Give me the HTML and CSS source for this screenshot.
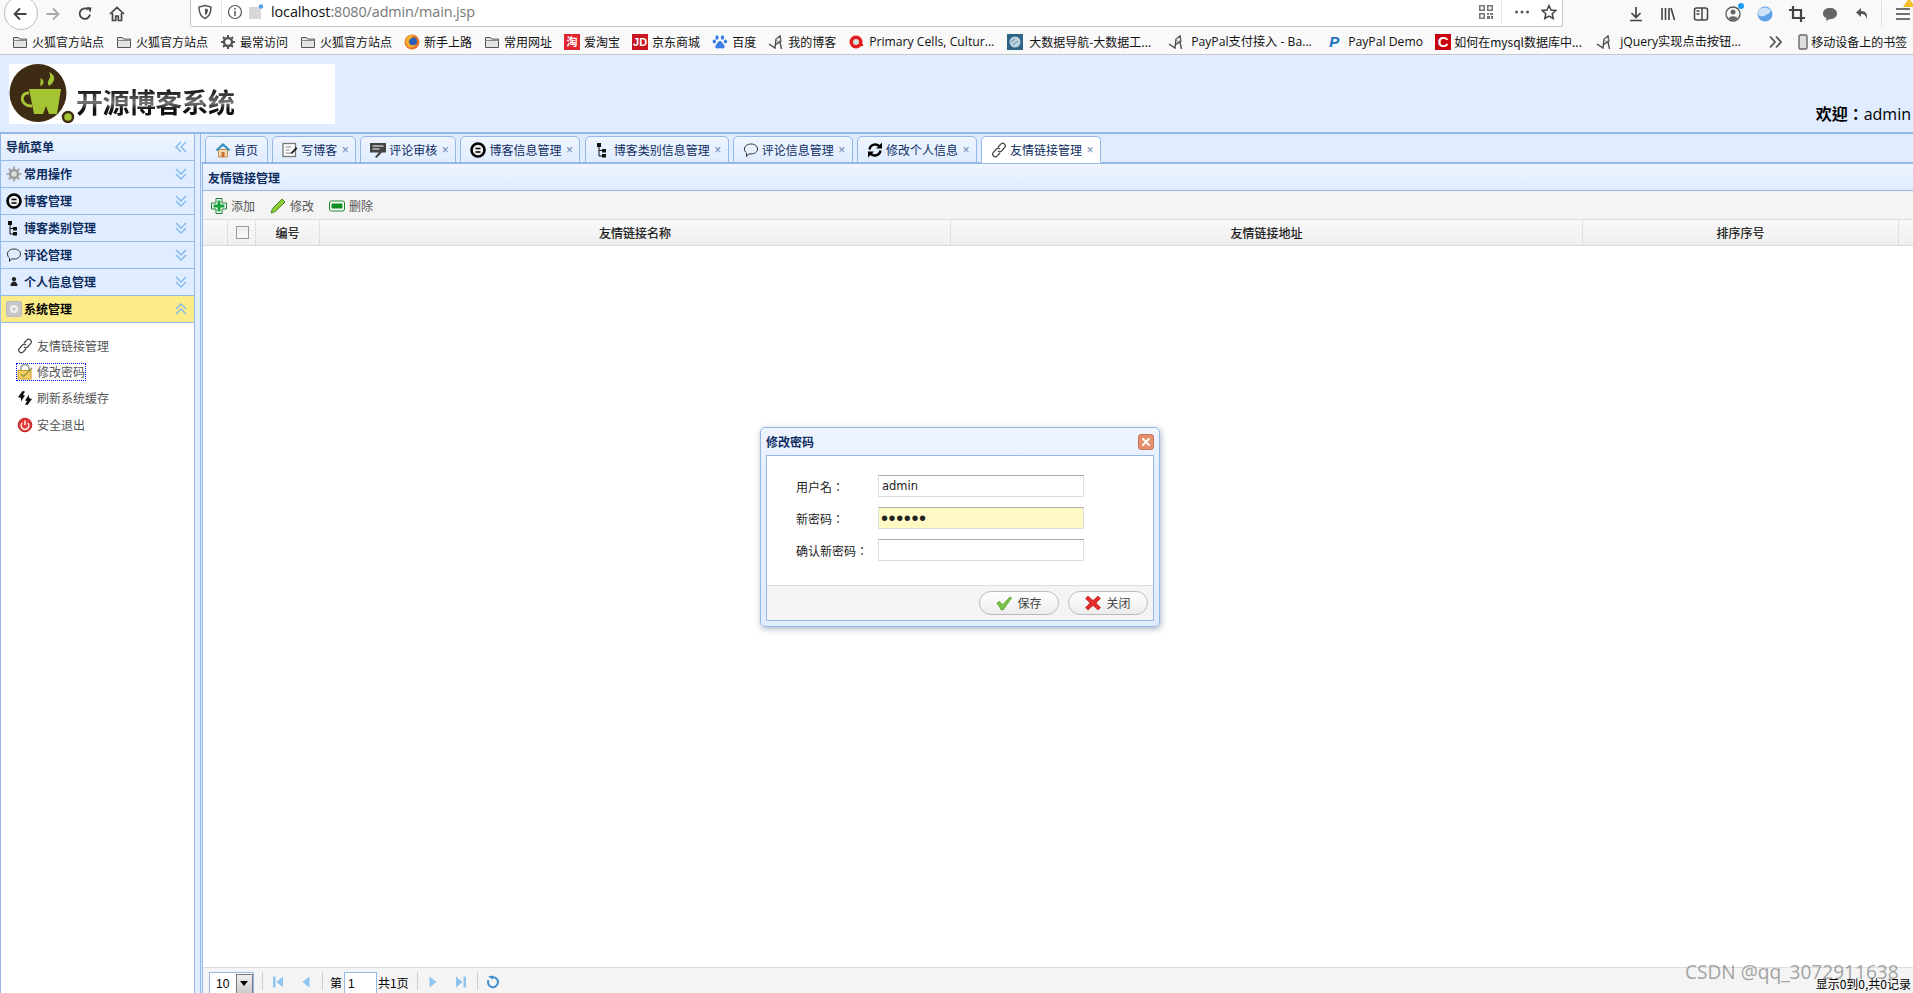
FILE: index.html
```html
<!DOCTYPE html>
<html lang="zh">
<head>
<meta charset="utf-8">
<title>开源博客系统</title>
<link rel="stylesheet" href="styles.css">
</head>
<body>
<svg class="sprite" aria-hidden="true">
  <symbol id="folder" viewBox="0 0 16 16"><path d="M1.500 3.500h5l1.300 1.600h6.700v8.400h-13z" fill="#e4e4e4" stroke="#555"/><path d="M1.500 6.500h13" stroke="#888"/></symbol>
  <symbol id="gear" viewBox="0 0 16 16"><circle cx="8" cy="8" r="4" fill="none" stroke="#555" stroke-width="2.400"/><path d="M8 1v3M8 12v3M1 8h3M12 8h3M3 3l2 2M11 11l2 2M13 3l-2 2M5 11l-2 2" stroke="#555" stroke-width="2"/></symbol>
  <symbol id="gearc" viewBox="0 0 16 16"><circle cx="8" cy="8" r="4" fill="#ddd" stroke="#999" stroke-width="2.400"/><path d="M8 .5v3M8 12.500v3M.5 8h3M12.500 8h3M2.700 2.700l2 2M11.300 11.300l2 2M13.300 2.700l-2 2M4.700 11.300l-2 2" stroke="#aaa" stroke-width="2.200"/></symbol>
  <symbol id="ff" viewBox="0 0 16 16"><circle cx="8" cy="8" r="7.500" fill="#e8742a"/><circle cx="9" cy="7.500" r="4" fill="#2b5fb8"/><path d="M2 6c1-4 5-6 9-4-3 0-4 2-4 3-2 0-3 2-2 4 1 3 5 3 7 1-1 3-5 4-7 3-2-1-4-4-3-7z" fill="#f6b22c"/></symbol>
  <symbol id="paw" viewBox="0 0 16 16"><g fill="#3a7fe8"><ellipse cx="5" cy="3.500" rx="1.700" ry="2.300"/><ellipse cx="10.500" cy="3.500" rx="1.700" ry="2.300"/><ellipse cx="2.300" cy="7.500" rx="1.700" ry="2.100"/><ellipse cx="13.500" cy="7.500" rx="1.700" ry="2.100"/><path d="M8 7c-2 0-3 3-4.500 4.500-1 2 1 3.500 2.500 3 1-.3 3-.3 4 0 1.500.5 3.500-1 2.500-3C11 10 10 7 8 7z"/></g></symbol>
  <symbol id="blog" viewBox="0 0 16 16"><path d="M1 10l6 4 1-9 4-3 1 5-6 4M12 8l1.500 7" fill="none" stroke="#444" stroke-width="1.300"/><circle cx="10.500" cy="5.500" r="2" fill="none" stroke="#888"/></symbol>
  <symbol id="cell" viewBox="0 0 16 16"><circle cx="8" cy="8" r="6.500" fill="#e21b1b"/><circle cx="8" cy="8" r="3" fill="#cfe3dc"/><circle cx="14" cy="11" r="1.200" fill="#e21b1b"/></symbol>
  <symbol id="data" viewBox="0 0 16 16"><rect width="16" height="16" fill="#2d6488"/><circle cx="8" cy="8" r="5.500" fill="#bcd3dc"/><path d="M4 8l4-3M6 11l5-4" stroke="#5b8aa3"/></symbol>
  <symbol id="phone" viewBox="0 0 16 16"><rect x="4" y="1" width="8" height="14" rx="1.500" fill="#ddd" stroke="#666" stroke-width="1.400"/></symbol>
  <symbol id="back" viewBox="0 0 16 16"><path d="M14.500 8h-12M8 2.500L2.500 8 8 13.500" fill="none" stroke="currentColor" stroke-width="1.800"/></symbol>
  <symbol id="fwd" viewBox="0 0 16 16"><path d="M1.500 8h12M8 2.500L13.500 8 8 13.500" fill="none" stroke="currentColor" stroke-width="1.800"/></symbol>
  <symbol id="reload" viewBox="0 0 16 16"><path d="M13 8.500A5.200 5.200 0 1 1 11 3.500" fill="none" stroke="currentColor" stroke-width="1.800"/><path d="M9.500 1l5 .5-1 5z" fill="currentColor"/></symbol>
  <symbol id="home" viewBox="0 0 16 16"><path d="M1 8l7-6.500L15 8M3.500 7v7.500h3.200V10h2.600v4.500h3.200V7" fill="none" stroke="currentColor" stroke-width="1.700"/></symbol>
  <symbol id="shield" viewBox="0 0 16 16"><path d="M8 1.500l6 1.500c0 6-1.500 9.500-6 11.500C3.500 12.500 2 9 2 3z" fill="none" stroke="#555" stroke-width="1.500"/><path d="M8 4.500l3 .8c0 3-.7 4.700-3 6z" fill="#555"/></symbol>
  <symbol id="info" viewBox="0 0 16 16"><circle cx="8" cy="8" r="6.500" fill="none" stroke="#555" stroke-width="1.200"/><path d="M8 7v5M8 4v1.500" stroke="#555" stroke-width="1.500"/></symbol>
  <symbol id="page" viewBox="0 0 16 16"><rect x="1" y="3" width="12" height="12" fill="#d8d8d8"/><circle cx="13" cy="2.500" r="2.300" fill="#5b9fe8"/></symbol>
  <symbol id="qr" viewBox="0 0 16 16"><g fill="#777"><path d="M1 1h6v6H1zM2.500 2.500v3h3v-3zM9 1h6v6H9zM10.500 2.500v3h3v-3zM1 9h6v6H1zM2.500 10.500v3h3v-3zM9 9h2v2H9zM12 9h3v2h-3zM9 12h3v3H9zM13 12h2v3h-2z"/></g></symbol>
  <symbol id="dots" viewBox="0 0 16 16"><g fill="#555"><circle cx="2.500" cy="8" r="1.500"/><circle cx="8" cy="8" r="1.500"/><circle cx="13.500" cy="8" r="1.500"/></g></symbol>
  <symbol id="star" viewBox="0 0 16 16"><path d="M8 1.500l2 4.500 4.800.5-3.600 3.200 1 4.800L8 12l-4.200 2.500 1-4.800L1.200 6.500 6 6z" fill="none" stroke="#444" stroke-width="1.500"/></symbol>
  <symbol id="dl" viewBox="0 0 16 16"><path d="M8 1v10M3.500 7L8 11.500 12.500 7M2 14.500h12" fill="none" stroke="#444" stroke-width="1.700"/></symbol>
  <symbol id="lib" viewBox="0 0 16 16"><path d="M2 2v12M5.500 2v12M9 2v12M11 2l3.500 12" fill="none" stroke="#444" stroke-width="1.600"/></symbol>
  <symbol id="side" viewBox="0 0 16 16"><rect x="1.500" y="2" width="13" height="12" rx="2" fill="none" stroke="#444" stroke-width="1.500"/><path d="M9 2v12M3.500 5h3M3.500 8h3" stroke="#444" stroke-width="1.500"/></symbol>
  <symbol id="prof" viewBox="0 0 16 16"><circle cx="8" cy="8" r="7" fill="none" stroke="#555" stroke-width="1.300"/><circle cx="8" cy="6" r="2.500" fill="#666"/><path d="M3.500 12.500c1-3 8-3 9 0-2 2-7 2-9 0z" fill="#666"/></symbol>
  <symbol id="sphere" viewBox="0 0 16 16"><circle cx="8" cy="8" r="7.500" fill="#5da3e6"/><path d="M2 10c4 1 9-1 12-5-2-4-9-5-12-1-1 2-1 4 0 6z" fill="#cfe3f6"/></symbol>
  <symbol id="crop" viewBox="0 0 16 16"><path d="M4 0v12h12M0 4h12v12" fill="none" stroke="#444" stroke-width="2.200"/></symbol>
  <symbol id="chat" viewBox="0 0 16 16"><path d="M8 2c4 0 7 2 7 5.500S12 13 8 13l-4 2 .5-3C2 11 1 9.500 1 7.500 1 4 4 2 8 2z" fill="#666"/></symbol>
  <symbol id="undo" viewBox="0 0 16 16"><path d="M7 2L2 6.500 7 11V8c3 0 5 1 5.500 5C14 8 12 5 7 5z" fill="#555"/></symbol>
  <symbol id="menu" viewBox="0 0 16 16"><path d="M1 3h14M1 8h14M1 13h14" stroke="#444" stroke-width="1.700"/></symbol>
  <symbol id="dchev" viewBox="0 0 16 16"><path d="M3 3l5 5 5-5M3 8l5 5 5-5" fill="none" stroke="#7fb8ee" stroke-width="1.400"/></symbol>
  <symbol id="uchev" viewBox="0 0 16 16"><path d="M3 8l5-5 5 5M3 13l5-5 5 5" fill="none" stroke="#7fb8ee" stroke-width="1.400"/></symbol>
  <symbol id="lchev" viewBox="0 0 16 16"><path d="M8 3L3 8l5 5M13 3L8 8l5 5" fill="none" stroke="#7fb8ee" stroke-width="1.400"/></symbol>
  <symbol id="rchev" viewBox="0 0 16 16"><path d="M3 2.500L8 8l-5 5.500M9 2.500L14 8l-5 5.500" fill="none" stroke="#555" stroke-width="1.800"/></symbol>
  <symbol id="bface" viewBox="0 0 16 16"><circle cx="8" cy="8" r="6.500" fill="#eee" stroke="#000" stroke-width="2.600"/><path d="M5.500 6.500h5M5.500 10h5" stroke="#000" stroke-width="1.300"/></symbol>
  <symbol id="tree" viewBox="0 0 16 16"><path d="M2 1h4v4H2zM7 7h4v3.500H7zM7 12h4v3.500H7z" fill="#111"/><path d="M4 4v10h4M4 8.500h4" stroke="#111" fill="none"/></symbol>
  <symbol id="bubble" viewBox="0 0 16 16"><path d="M8 2c4 0 6.500 2.200 6.500 5S12 12 8 12c-.7 0-1.500 0-2.200-.2L3.500 14.500V11C2.200 10 1.500 8.500 1.500 7 1.500 4.200 4 2 8 2z" fill="none" stroke="#333"/></symbol>
  <symbol id="person" viewBox="0 0 16 16"><circle cx="8" cy="5.200" r="2.100" fill="#222"/><path d="M4.500 12c0-3 1.500-4.500 3.500-4.500s3.500 1.500 3.500 4.500z" fill="#222"/></symbol>
  <symbol id="sys" viewBox="0 0 16 16"><rect x=".5" y=".5" width="15" height="15" rx="1" fill="#c8c8c8" stroke="#bbb"/><circle cx="8" cy="8" r="4" fill="#eee"/><circle cx="8" cy="8" r="1.500" fill="#bbb"/></symbol>
  <symbol id="link" viewBox="0 0 16 16"><g fill="none" stroke="#444" stroke-width="1.200"><path d="M7 5l2.800-2.800a2.500 2.500 0 0 1 3.800 3.500L10.500 9a2.500 2.500 0 0 1-3.500 0"/><path d="M9 11l-2.800 2.800a2.500 2.500 0 0 1-3.800-3.500L5.500 7a2.500 2.500 0 0 1 3.500 0"/></g></symbol>
  <symbol id="lock" viewBox="0 0 16 16"><path d="M4 7V4.500a4 4 0 0 1 8 0V7" fill="none" stroke="#aaa" stroke-width="2"/><rect x="1" y="6.500" width="13" height="8.500" fill="#f6cf63" stroke="#c99a2e"/><path d="M4 10l2.500 2.500L15 4" fill="none" stroke="#8a9a3a" stroke-width="1.400"/></symbol>
  <symbol id="sync" viewBox="0 0 16 16"><path d="M1 7l4.500-6 2.500.5-2 3.500 2 .5L4 11.500V8zM15 9l-4.500 6-2.500-.5 2-3.500-2-.5L12 4.500V8z" fill="#111"/></symbol>
  <symbol id="exit" viewBox="0 0 16 16"><circle cx="8" cy="8" r="6.800" fill="#e23a3a" stroke="#b92020"/><path d="M5.200 6a3.800 3.800 0 1 0 5.600 0M8 3.500V8" fill="none" stroke="#fff" stroke-width="1.400"/></symbol>
  <symbol id="house" viewBox="0 0 16 16"><path d="M3.500 7.500h9V15h-9z" fill="#f0d9b8" stroke="#c58a4c"/><rect x="6.500" y="10" width="3" height="5" fill="#c9702f"/><path d="M.5 8L8 1l7.500 7-1.500 1L8 4 2 9z" fill="#2b8fb8"/></symbol>
  <symbol id="write" viewBox="0 0 16 16"><rect x="1" y="1.500" width="12.500" height="13" fill="#fff" stroke="#777" stroke-width="1.300"/><path d="M3.500 5h6M3.500 8h4M3.500 11h6" stroke="#888"/><path d="M9 10.500l5-5.500 1.500 1.500-5 5-2 .5z" fill="#222"/></symbol>
  <symbol id="review" viewBox="0 0 16 16"><rect x="0" y="1" width="16" height="9.500" fill="#444"/><path d="M2.500 4h11M2.500 7h7" stroke="#fff"/><path d="M5 15l5-6 2 1.500-5.500 5.500z" fill="#444"/></symbol>
  <symbol id="refresh" viewBox="0 0 16 16"><path d="M2.500 7.500A5.800 5.800 0 0 1 13 5M13.500 8.500A5.800 5.800 0 0 1 3 11" fill="none" stroke="#000" stroke-width="2.400"/><path d="M15 .5v6h-6zM1 15.500v-6h6z" fill="#000"/></symbol>
  <symbol id="plus" viewBox="0 0 16 16"><path d="M5 .5h6v4.500h4.500v6H11v4.500H5V11H.5V5H5z" fill="#fff" stroke="#1c7d35"/><path d="M6.500 2.500h3v4h4v3h-4v4h-3v-4h-4v-3h4z" fill="#17a338"/></symbol>
  <symbol id="pencil" viewBox="0 0 16 16"><path d="M1 15l1.500-4.500L12 1l3 3-9.500 9.500z" fill="#8ccb3e" stroke="#4f8f20"/></symbol>
  <symbol id="minus" viewBox="0 0 16 16"><rect x=".5" y="3" width="15" height="10" rx="2" fill="#fff" stroke="#1a8a2e"/><rect x="2.500" y="5.500" width="11" height="5" fill="#0f8f22"/></symbol>
  <symbol id="check" viewBox="0 0 16 16"><path d="M1 8l2.500-1.500L6.500 10 14 2l1.500 1L7 15h-1.500z" fill="#7cc64a" stroke="#4c9a28" stroke-width=".8"/></symbol>
  <symbol id="xred" viewBox="0 0 16 16"><path d="M3 1l5 4.500L13 1l2.500 2.500L11 8l4.500 4.500L13 15l-5-4.500L3 15 .5 12.500 5 8 .5 3.500z" fill="#e42a2a" stroke="#b61c1c" stroke-width=".6"/></symbol>
  <symbol id="first" viewBox="0 0 16 16"><path d="M3 2.500h2.500v11H3zM13 2.500v11L6.500 8z" fill="#8fc4ee"/></symbol>
  <symbol id="prev" viewBox="0 0 16 16"><path d="M11.500 2.500v11L4.500 8z" fill="#8fc4ee"/></symbol>
  <symbol id="next" viewBox="0 0 16 16"><path d="M4.500 2.500v11L11.500 8z" fill="#8fc4ee"/></symbol>
  <symbol id="last" viewBox="0 0 16 16"><path d="M13 2.500h-2.500v11H13zM3 2.500v11L9.500 8z" fill="#8fc4ee"/></symbol>
  <symbol id="pgload" viewBox="0 0 16 16"><path d="M8 3.200A5 5 0 1 1 3.500 6" fill="none" stroke="#3f8fd0" stroke-width="2"/><path d="M3 2.500l5-1v4z" fill="#3f8fd0"/></symbol>
</svg>

<div class="browser">
  <div class="nav-row">
    <div class="nav-btn back-btn"><svg class="i16 c-dark"><use href="#back"/></svg></div>
    <div class="nav-btn"><svg class="i16 c-light"><use href="#fwd"/></svg></div>
    <div class="nav-btn"><svg class="i16 c-dark"><use href="#reload"/></svg></div>
    <div class="nav-btn"><svg class="i16 c-dark"><use href="#home"/></svg></div>
    <div class="urlbar">
      <svg class="i16"><use href="#shield"/></svg>
      <span class="url-sep"></span>
      <svg class="i16"><use href="#info"/></svg>
      <svg class="i16"><use href="#page"/></svg>
      <span class="url"><b>localhost</b>:8080/admin/main.jsp</span>
      <span class="url-fill"></span>
      <svg class="i16"><use href="#qr"/></svg>
      <span class="url-sep sep-r"></span>
      <svg class="i16"><use href="#dots"/></svg>
      <svg class="i16 star"><use href="#star"/></svg>
    </div>
    <div class="tools">
      <svg class="i16"><use href="#dl"/></svg>
      <svg class="i16"><use href="#lib"/></svg>
      <svg class="i16"><use href="#side"/></svg>
      <span class="prof"><svg class="i16"><use href="#prof"/></svg><i class="dot"></i></span>
      <svg class="i16"><use href="#sphere"/></svg>
      <svg class="i16"><use href="#crop"/></svg>
      <svg class="i16"><use href="#chat"/></svg>
      <svg class="i16"><use href="#undo"/></svg>
    </div>
    <span class="menu-sep"></span>
    <span class="menu-btn"><svg class="i16"><use href="#menu"/></svg><i class="warn"></i></span>
  </div>
  <div class="bm-row">
    <span class="bm"><svg class="i16"><use href="#folder"/></svg>火狐官方站点</span>
    <span class="bm"><svg class="i16"><use href="#folder"/></svg>火狐官方站点</span>
    <span class="bm"><svg class="i16"><use href="#gear"/></svg>最常访问</span>
    <span class="bm"><svg class="i16"><use href="#folder"/></svg>火狐官方站点</span>
    <span class="bm"><svg class="i16"><use href="#ff"/></svg>新手上路</span>
    <span class="bm"><svg class="i16"><use href="#folder"/></svg>常用网址</span>
    <span class="bm"><span class="fav fav-tao">淘</span>爱淘宝</span>
    <span class="bm"><span class="fav fav-jd">JD</span>京东商城</span>
    <span class="bm"><svg class="i16"><use href="#paw"/></svg>百度</span>
    <span class="bm"><svg class="i16"><use href="#blog"/></svg>我的博客</span>
    <span class="bm"><svg class="i16"><use href="#cell"/></svg><span class="lat w-primary">Primary Cells, Cultur...</span></span>
    <span class="bm"><svg class="i16"><use href="#data"/></svg><span class="w-data">大数据导航-大数据工...</span></span>
    <span class="bm"><svg class="i16"><use href="#blog"/></svg><span class="lat w-pay">PayPal支付接入 - Ba...</span></span>
    <span class="bm"><span class="fav fav-pp">P</span><span class="lat w-demo">PayPal Demo</span></span>
    <span class="bm"><span class="fav fav-c">C</span><span class="w-mysql">如何在mysql数据库中...</span></span>
    <span class="bm"><svg class="i16"><use href="#blog"/></svg><span class="lat w-jq">jQuery实现点击按钮...</span></span>
    <svg class="i16 more"><use href="#rchev"/></svg>
    <span class="bm mobile"><svg class="i16"><use href="#phone"/></svg>移动设备上的书签</span>
  </div>
</div>

<header class="app-head">
  <div class="logo">
    <svg class="logo-mark" viewBox="0 0 68 60">
      <ellipse cx="29" cy="29" rx="28.500" ry="29" fill="#3d2b14"/>
      <path d="M20 25h32l-4 25H40l-3-8-3 8h-9z" fill="#a5c433"/>
      <path d="M20 29c-9-1-10 13 3 13" fill="none" stroke="#a5c433" stroke-width="3"/>
      <path d="M40 22c-4-6 4-7 0-14 8 4 6 10 0 14zM32 22c-2-3 1-5-1-8 5 2 4 6 1 8z" fill="#a5c433"/>
      <circle cx="59" cy="53" r="5" fill="#a5c433" stroke="#3d2b14" stroke-width="2.500"/>
    </svg>
    <span class="logo-text">开源博客系统</span>
  </div>
  <div class="welcome"><b lang="zh-TW">欢迎：</b>admin</div>
</header>

<div class="workspace">
  <aside class="side">
    <div class="acc-head acc-title"><span class="acc-label no-icon">导航菜单</span><svg class="i16 acc-chev"><use href="#lchev"/></svg></div>
    <div class="acc-head"><svg class="i16"><use href="#gearc"/></svg><span class="acc-label">常用操作</span><svg class="i16 acc-chev"><use href="#dchev"/></svg></div>
    <div class="acc-head"><svg class="i16"><use href="#bface"/></svg><span class="acc-label">博客管理</span><svg class="i16 acc-chev"><use href="#dchev"/></svg></div>
    <div class="acc-head"><svg class="i16"><use href="#tree"/></svg><span class="acc-label">博客类别管理</span><svg class="i16 acc-chev"><use href="#dchev"/></svg></div>
    <div class="acc-head"><svg class="i16"><use href="#bubble"/></svg><span class="acc-label">评论管理</span><svg class="i16 acc-chev"><use href="#dchev"/></svg></div>
    <div class="acc-head"><svg class="i16"><use href="#person"/></svg><span class="acc-label">个人信息管理</span><svg class="i16 acc-chev"><use href="#dchev"/></svg></div>
    <div class="acc-head acc-open"><svg class="i16"><use href="#sys"/></svg><span class="acc-label">系统管理</span><svg class="i16 acc-chev"><use href="#uchev"/></svg></div>
    <ul class="side-links">
      <li><a><svg class="i16"><use href="#link"/></svg>友情链接管理</a></li>
      <li><a class="focused"><svg class="i16"><use href="#lock"/></svg>修改密码</a></li>
      <li><a><svg class="i16"><use href="#sync"/></svg>刷新系统缓存</a></li>
      <li><a><svg class="i16"><use href="#exit"/></svg>安全退出</a></li>
    </ul>
  </aside>

  <main class="main">
    <div class="tabs">
      <div class="tab tab-home"><svg class="i16"><use href="#house"/></svg>首页</div>
      <div class="tab"><svg class="i16"><use href="#write"/></svg>写博客<span class="x">×</span></div>
      <div class="tab"><svg class="i16"><use href="#review"/></svg>评论审核<span class="x">×</span></div>
      <div class="tab"><svg class="i16"><use href="#bface"/></svg>博客信息管理<span class="x">×</span></div>
      <div class="tab"><svg class="i16"><use href="#tree"/></svg>博客类别信息管理<span class="x">×</span></div>
      <div class="tab"><svg class="i16"><use href="#bubble"/></svg>评论信息管理<span class="x">×</span></div>
      <div class="tab"><svg class="i16"><use href="#refresh"/></svg>修改个人信息<span class="x">×</span></div>
      <div class="tab tab-on"><svg class="i16"><use href="#link"/></svg>友情链接管理<span class="x">×</span></div>
    </div>
    <section class="panel">
      <h2 class="panel-title">友情链接管理</h2>
      <div class="toolbar">
        <span class="tool"><svg class="i16"><use href="#plus"/></svg>添加</span>
        <span class="tool"><svg class="i16"><use href="#pencil"/></svg>修改</span>
        <span class="tool"><svg class="i16"><use href="#minus"/></svg>删除</span>
      </div>
      <div class="grid-head">
        <span class="cell"></span>
        <span class="cell"><i class="cb"></i></span>
        <span class="cell">编号</span>
        <span class="cell">友情链接名称</span>
        <span class="cell">友情链接地址</span>
        <span class="cell">排序序号</span>
        <span></span>
      </div>
      <div class="grid-body"></div>
      <div class="pager">
        <span class="pg-select">10<i class="pg-arrow"></i></span>
        <span class="pg-sep"></span>
        <svg class="i16 pg-ic"><use href="#first"/></svg>
        <svg class="i16 pg-ic pg-gap"><use href="#prev"/></svg>
        <span class="pg-sep"></span>
        <span>第</span>
        <span class="pg-input">1</span>
        <span>共1页</span>
        <span class="pg-sep"></span>
        <svg class="i16 pg-ic"><use href="#next"/></svg>
        <svg class="i16 pg-ic pg-gap"><use href="#last"/></svg>
        <span class="pg-sep"></span>
        <svg class="i16 pg-ic"><use href="#pgload"/></svg>
        <span class="pg-info">显示0到0,共0记录</span>
      </div>
    </section>
  </main>
</div>

<div class="dialog">
  <div class="dlg-title"><span>修改密码</span><i class="dlg-close"></i></div>
  <div class="dlg-body">
    <form class="dlg-form">
      <label class="lbl" lang="zh-TW">用户名：</label><input class="inp" type="text" value="admin">
      <label class="lbl" lang="zh-TW">新密码：</label><input class="inp inp-fill" type="password" value="123456">
      <label class="lbl" lang="zh-TW">确认新密码：</label><input class="inp" type="password">
    </form>
    <div class="dlg-foot">
      <span class="btn"><svg class="i16"><use href="#check"/></svg>保存</span>
      <span class="btn"><svg class="i16"><use href="#xred"/></svg>关闭</span>
    </div>
  </div>
</div>

<div class="watermark">CSDN @qq_3072911638</div>
</body>
</html>
```
FILE: styles.css
```css
* { box-sizing: border-box; }
html, body { margin: 0; height: 993px; overflow: hidden; }
body {
  background: #fff;
  color: #000;
  font: 12px/16px "Noto Sans CJK SC", "Liberation Sans", sans-serif;
}
.sprite { position: absolute; width: 0; height: 0; }
.i16 { width: 16px; height: 16px; flex: none; display: block; }
.c-dark { color: #444; }
.c-light { color: #aaa; }

/* browser chrome */
.browser { background: #f9f9fa; height: 55px; border-bottom: 1px solid #c8c8c8; }
.nav-row { height: 27px; display: flex; align-items: center; padding-left: 5px; position: relative; }
.nav-btn { width: 32px; height: 24px; display: flex; align-items: center; justify-content: center; position: relative; }
.back-btn { margin-left: -1px; margin-right: 1px; }
.back-btn::before {
  content: ""; position: absolute; left: 0; top: -6px; width: 32px; height: 32px;
  border: 1px solid #bbb; border-radius: 50%; background: #fff;
}
.back-btn svg { position: relative; }
.urlbar {
  margin-left: 57px; width: 1373px; height: 27px;
  background: #fff; border: 1px solid #c4c4c4; border-top: 0; border-radius: 0 0 2px 2px;
  display: flex; align-items: center; padding: 0 5px 2px 6px;
}
.url-sep { width: 1px; height: 22px; background: #e4e4e4; margin: 0 5px 0 8px; }
.sep-r { margin: 0 12px 0 7px; }
.url { margin-left: 7px; font: 14.400px/20px "Open Sans", sans-serif; color: #777; letter-spacing: -.1px; }
.url b { font-weight: 400; color: #111; }
.url-fill { flex: 1; }
.urlbar > svg + svg { margin-left: 5px; }
.urlbar .star { margin-left: 11px; }
.urlbar > .url-sep + svg { margin-left: 0; }
.tools { margin-left: 57px; display: flex; gap: 16.300px; padding-left: 8px; }
.prof { position: relative; display: block; }
.dot { position: absolute; right: -3px; top: -3px; width: 6px; height: 6px; border-radius: 50%; background: #1a9cf0; }
.menu-sep { width: 1px; height: 26px; background: #e0e0e0; margin-left: 11px; }
.menu-btn { position: relative; margin-left: 13px; }
.warn { position: absolute; left: 8px; top: -8px; width: 0; height: 0; border: 6px solid transparent; border-bottom: 9px solid #f5c02c; border-top: 0; }

.bm-row { height: 27px; display: flex; align-items: center; padding: 2px 0 0 12px; gap: 12px; white-space: nowrap; color: #111; }
.bm { display: flex; align-items: center; gap: 4px; }
.lat { font-family: "Open Sans", "Noto Sans CJK SC", sans-serif; font-size: 12.200px; }
.w-primary { width: 126px; margin-left: 1px; }
.w-data { width: 127px; margin-left: 2px; }
.w-pay { width: 123px; margin-left: 3px; }
.w-demo { width: 75px; margin-left: 2px; }
.w-mysql { width: 130px; margin-left: -1px; }
.w-jq { width: 123px; margin-left: 4px; }
.fav { width: 16px; height: 16px; flex: none; display: block; text-align: center; font: 700 11px/16px "Liberation Sans", "Noto Sans CJK SC", sans-serif; color: #fff; }
.fav-tao { background: #e1252f; }
.fav-jd { background: #c91623; }
.fav-pp { background: none; color: #1c6fc0; font-size: 15px; font-style: italic; }
.fav-c { background: #c9000f; font-size: 15px; }
.more { margin-left: 12px; }
.mobile { margin-left: 0; gap: 0; }

/* app header */
.app-head { height: 79px; background: #e0ecff; border-bottom: 2px solid #95b8e7; display: flex; justify-content: space-between; align-items: flex-end; padding: 9px 2px 7px 9px; }
.logo { width: 326px; height: 60px; background: #fff; display: flex; align-items: flex-start; align-self: flex-start; }
.logo-mark { width: 68px; height: 60px; display: block; flex: none; }
.logo-text {
  margin: 20px 0 0 -1px; font-size: 27px; line-height: 36px; font-weight: 700; letter-spacing: -.6px;
  background: linear-gradient(#1a1a1a 20%, #777 52%, #111 70%); -webkit-background-clip: text; background-clip: text; color: transparent;
}
.welcome { font: 16px/22px "Open Sans", "Noto Sans CJK TC", sans-serif; color: #000; }
.welcome b { font-family: "Noto Sans CJK TC", sans-serif; }

/* layout */
.workspace { display: flex; height: 859px; background: #e0ecff; }
.side { width: 195px; flex: none; background: #fff; border: solid #95b8e7; border-width: 0 1px 0 1px; display: flex; flex-direction: column; }
.acc-head {
  height: 27px; flex: none; background: #e0ecff; border-bottom: 1px solid #95b8e7;
  display: flex; align-items: center; padding: 0 5px 0 5px; position: relative;
}
.acc-title { background: linear-gradient(#eff5ff, #e0ecff); }
.acc-open { background: #fbec88; }
.acc-label { margin-left: 2px; font-weight: 700; color: #0e2d5f; flex: 1; }
.no-icon { margin-left: 0; }
.acc-open .acc-label { color: #000; }
.side-links { list-style: none; margin: 0; padding: 14px 0 0 15px; color: #555; }
.side-links li { height: 26.200px; }
.side-links a { display: inline-flex; align-items: center; gap: 4px; height: 18px; padding: 0 1px; }
.focused { outline: 1px dotted #00f; outline-offset: -1px; }

.main { flex: 1; min-width: 0; margin-left: 5px; border-left: 1px solid #95b8e7; display: flex; flex-direction: column; }
.tabs { height: 29px; flex: none; display: flex; gap: 4.150px; align-items: flex-end; padding: 0 0 0 4px; border-bottom: 1px solid #95b8e7; }
.tab {
  height: 27px; margin-bottom: -1px; padding: 1px 7px 0 10px; display: flex; align-items: center;
  background: linear-gradient(#eff5ff, #e0ecff); border: 1px solid #95b8e7; border-radius: 5px 5px 0 0;
  color: #0e2d5f; white-space: nowrap;
}
.tab svg { margin-right: 3px; margin-left: -1px; }
.tab-home { padding-right: 9px; }
.tab-on { background: #fff; border-bottom-color: #fff; }
.x { width: 8px; margin-left: 4px; margin-right: -1px; color: #6b85ad; font: 12px/12px "Liberation Sans", sans-serif; text-align: center; }

.panel { flex: 1; min-height: 0; margin-left: 1px; border-left: 1px solid #95b8e7; background: #fff; display: flex; flex-direction: column; overflow: hidden; }
.panel-title { margin: 0; height: 28px; flex: none; background: linear-gradient(#eff5ff, #e0ecff); border-bottom: 1px solid #95b8e7; border-top: 1px solid #95b8e7; padding: 6px 0 0 5px; font-size: 12px; line-height: 16px; font-weight: 700; color: #0e2d5f; }
.toolbar { height: 29px; flex: none; background: #f4f4f4; border-bottom: 1px solid #ddd; display: flex; align-items: center; padding: 1px 0 0 8px; gap: 15px; color: #555; }
.tool { display: flex; align-items: center; gap: 4px; }
.grid-head {
  height: 26px; flex: none; display: grid; grid-template-columns: 25px 28px 64px 631px 632px 316px 1fr;
  background: linear-gradient(#f9f9f9, #efefef); border-bottom: 1px solid #ddd;
}
.cell { display: flex; align-items: center; justify-content: center; border-right: 1px dotted #ccc; color: #111; -webkit-text-stroke: .2px #111; }
.cb { display: block; width: 13px; height: 13px; margin-left: 2px; border: 1px solid #999; background: linear-gradient(#e8e8e8, #fff); box-shadow: inset 0 0 0 1px #f4f4f4; }
.grid-body { flex: 1; min-height: 0; }
.pager { height: 26px; flex: none; background: #f4f4f4; border-top: 1px solid #ddd; display: flex; padding: 4px 2px 0 6px; white-space: nowrap; line-height: 22px; }
.pg-select { width: 45px; height: 22px; flex: none; background: #fff; border: 1px solid #95b8e7; border-bottom: 0; padding-left: 6px; position: relative; font-family: "Liberation Sans", sans-serif; font-size: 12px; }
.pg-arrow { position: absolute; right: 0; top: 1px; width: 17px; height: 20px; background: linear-gradient(#f0f0f0, #ccc); border: 1px solid #777; }
.pg-arrow::after { content: ""; position: absolute; left: 3px; top: 6px; border: 4px solid transparent; border-top: 5px solid #000; border-bottom: 0; }
.pg-sep { width: 1px; height: 18px; margin: 0 7px 0 8px; background: #ccc; flex: none; align-self: flex-start; }
.pg-ic { margin: 2px 0 0 0; }
.pg-gap { margin-left: 12px; }
.pager > .pg-sep + .pg-ic { margin-left: 0; }
.pg-input { width: 33px; height: 22px; margin: 0 1px 0 2px; background: #fff; border: 1px solid #95b8e7; border-bottom: 0; padding-left: 3px; flex: none; font-family: "Liberation Sans", sans-serif; }
.pg-info { margin-left: auto; padding-top: 1px; }

/* dialog */
.dialog { position: absolute; left: 760px; top: 427px; width: 400px; height: 200px; background: linear-gradient(#eff5ff, #e0ecff 30%); border: 1px solid #95b8e7; border-radius: 5px; box-shadow: 1px 2px 6px rgba(100,120,150,.55); padding: 0 5px 5px; display: flex; flex-direction: column; }
.dlg-title { height: 27px; flex: none; display: flex; justify-content: space-between; align-items: center; font-weight: 700; color: #0e2d5f; }
.dlg-close { display: block; width: 16px; height: 16px; border-radius: 3px; margin: 0 0 -1px; background: #e5906f; border: 1px solid #c8755a; position: relative; }
.dlg-close::before, .dlg-close::after { content: ""; position: absolute; left: 2px; top: 6px; width: 10px; height: 2.400px; background: #fff; transform: rotate(45deg); }
.dlg-close::after { transform: rotate(-45deg); }
.dlg-body { flex: 1; background: #fff; border: 1px solid #95b8e7; display: flex; flex-direction: column; }
.dlg-form { flex: 1; display: grid; grid-template-columns: 82px 206px; grid-auto-rows: 22px; row-gap: 10px; align-items: center; padding: 19px 0 0 29px; }
.lbl { color: #222; font-family: "Noto Sans CJK TC", sans-serif; padding-top: 1px; }
.inp { width: 206px; height: 22px; margin: 0; padding: 0 3px; background: #fff; border: 1px solid #ddd; border-top-color: #aaa; outline: 0; font: 11.500px/20px "DejaVu Sans", sans-serif; color: #222; }
.inp-fill { background: #fef9c5; font: 20px/20px "Liberation Sans", sans-serif; letter-spacing: .6px; padding-left: 2px; }
.dlg-foot { height: 35px; flex: none; background: #f4f4f4; border-top: 1px solid #ddd; display: flex; justify-content: flex-end; gap: 9px; padding: 5px 5px 0 0; }
.btn { width: 80px; height: 24px; border: 1px solid #bbb; border-radius: 12px; background: linear-gradient(#fff, #ececec); display: flex; align-items: center; justify-content: center; gap: 5px; color: #444; }

.watermark { position: absolute; left: 1685px; top: 958px; font: 19.100px/28px "Open Sans", sans-serif; color: rgba(90,90,90,.55); white-space: nowrap; }
```
